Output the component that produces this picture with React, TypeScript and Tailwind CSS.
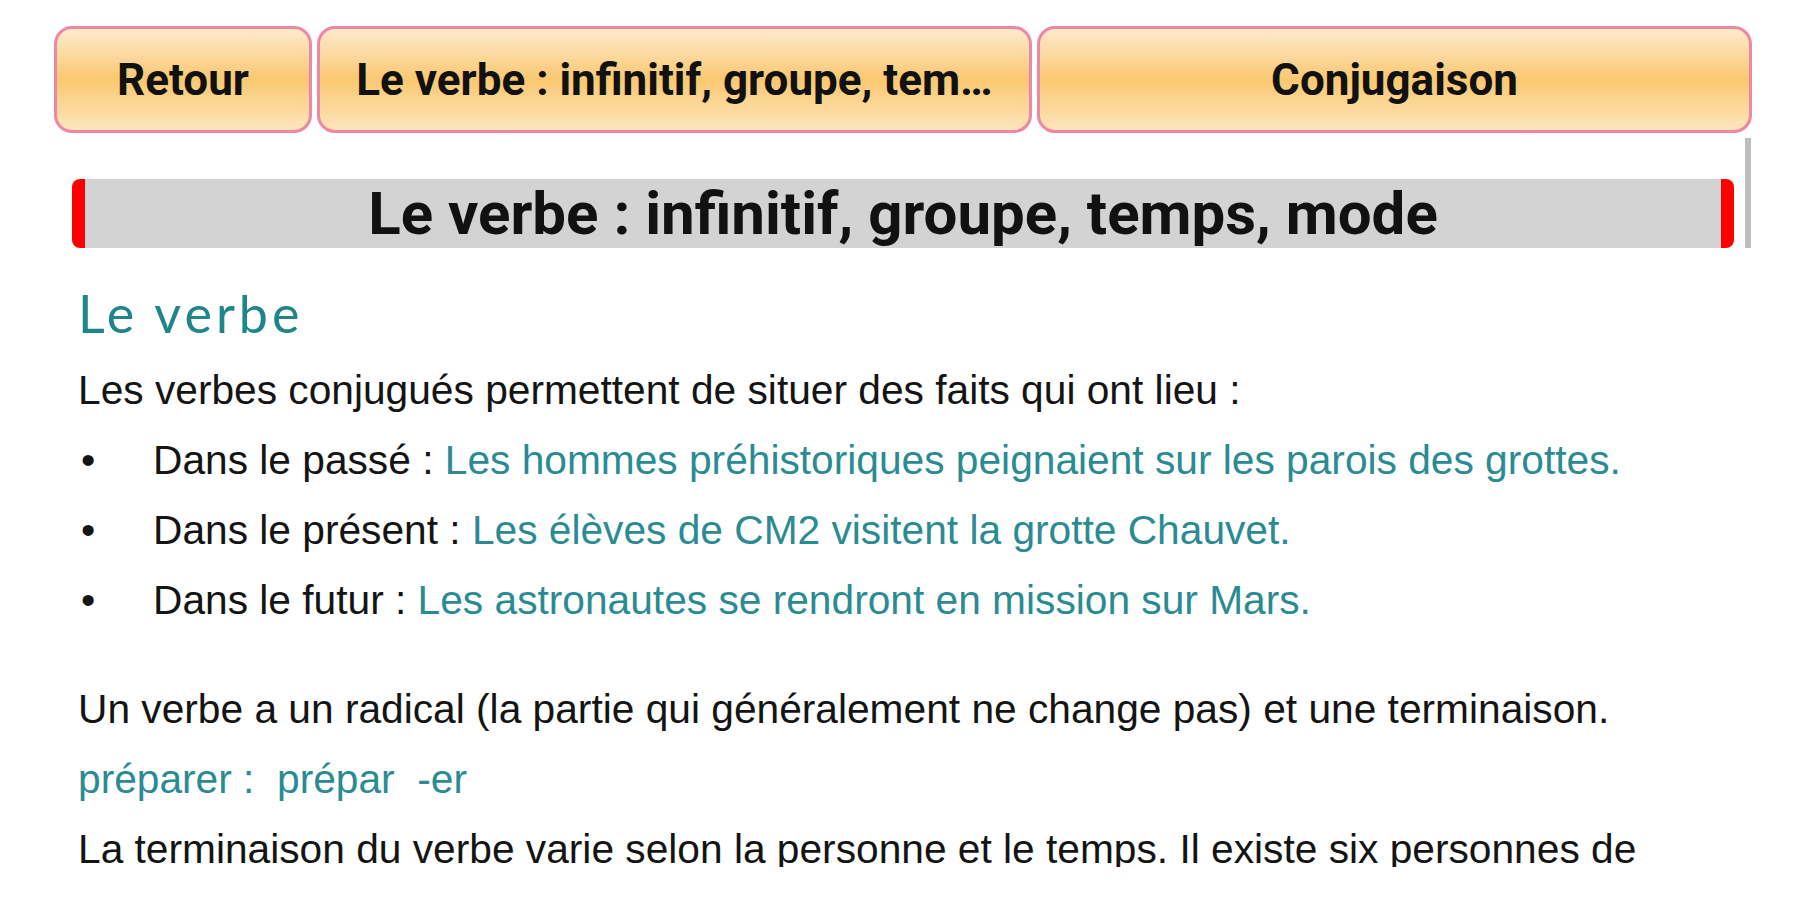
import React from "react";

function Btn({ className, children }: { className: string; children: React.ReactNode }) {
  return (
    <div
      className={
        "h-[107px] rounded-[18px] border-[3px] border-[#ee86a6] bg-gradient-to-b from-[#feeacb] via-[#f9c870] to-[#fde6bb] flex items-center justify-center px-[30px] min-w-0 " +
        className
      }
    >
      <span className="truncate text-[44px] font-bold text-[#111] font-['Roboto',sans-serif]">{children}</span>
    </div>
  );
}

const teal = "text-[#2b8b93]";

export default function App() {
  return (
    <div className="w-[1800px] h-[900px] bg-white overflow-hidden">
      <div className="flex gap-[5px] pl-[54px] pr-[48px] pt-[26px]">
        <Btn className="w-[258px] shrink-0">Retour</Btn>
        <Btn className="flex-1">Le verbe : infinitif, groupe, tem…</Btn>
        <Btn className="flex-1">Conjugaison</Btn>
      </div>
      <div className="flex h-[734px] overflow-hidden">
        <div className="w-[1745px] shrink-0">
          <div className="pl-[72px] pr-[11px] pt-[46px]">
            <div className="flex h-[69px]">
              <div className="w-[13px] bg-[#ff0000] rounded-l-[8px]" />
              <div className="flex-1 bg-[#d3d3d3] flex items-center justify-center">
                <span className="text-[60px] font-bold text-[#111] font-['Roboto',sans-serif] leading-none">
                  Le verbe : infinitif, groupe, temps, mode
                </span>
              </div>
              <div className="w-[13px] bg-[#ff0000] rounded-r-[8px]" />
            </div>
          </div>
          <div className="pl-[78px]">
            <h2 className="mt-[35px] text-[52px] leading-[60px] tracking-[4px] font-['Lato',sans-serif] text-[#1f8589]">Le verbe</h2>
            <div className="mt-[12px] font-['Liberation_Sans',Arial,sans-serif] text-[40.7px] leading-[70px] text-[#141414]">
              <p>Les verbes conjugués permettent de situer des faits qui ont lieu :</p>
              <ul>
                <li className="flex">
                  <span className="w-[75px] shrink-0 pl-[3px]">•</span>
                  <span>
                    Dans le passé : <span className={teal}>Les hommes préhistoriques peignaient sur les parois des grottes.</span>
                  </span>
                </li>
                <li className="flex">
                  <span className="w-[75px] shrink-0 pl-[3px]">•</span>
                  <span>
                    Dans le présent : <span className={teal}>Les élèves de CM2 visitent la grotte Chauvet.</span>
                  </span>
                </li>
                <li className="flex">
                  <span className="w-[75px] shrink-0 pl-[3px]">•</span>
                  <span>
                    Dans le futur : <span className={teal}>Les astronautes se rendront en mission sur Mars.</span>
                  </span>
                </li>
              </ul>
              <p className="mt-[39px]">Un verbe a un radical (la partie qui généralement ne change pas) et une terminaison.</p>
              <p className={"whitespace-pre " + teal}>préparer :  prépar  -er</p>
              <p className="whitespace-nowrap">La terminaison du verbe varie selon la personne et le temps. Il existe six personnes de</p>
            </div>
          </div>
        </div>
        <div className="w-[6px] shrink-0">
          <div className="mt-[5px] h-[110px] bg-[#bdbdbd]" />
        </div>
      </div>
    </div>
  );
}
